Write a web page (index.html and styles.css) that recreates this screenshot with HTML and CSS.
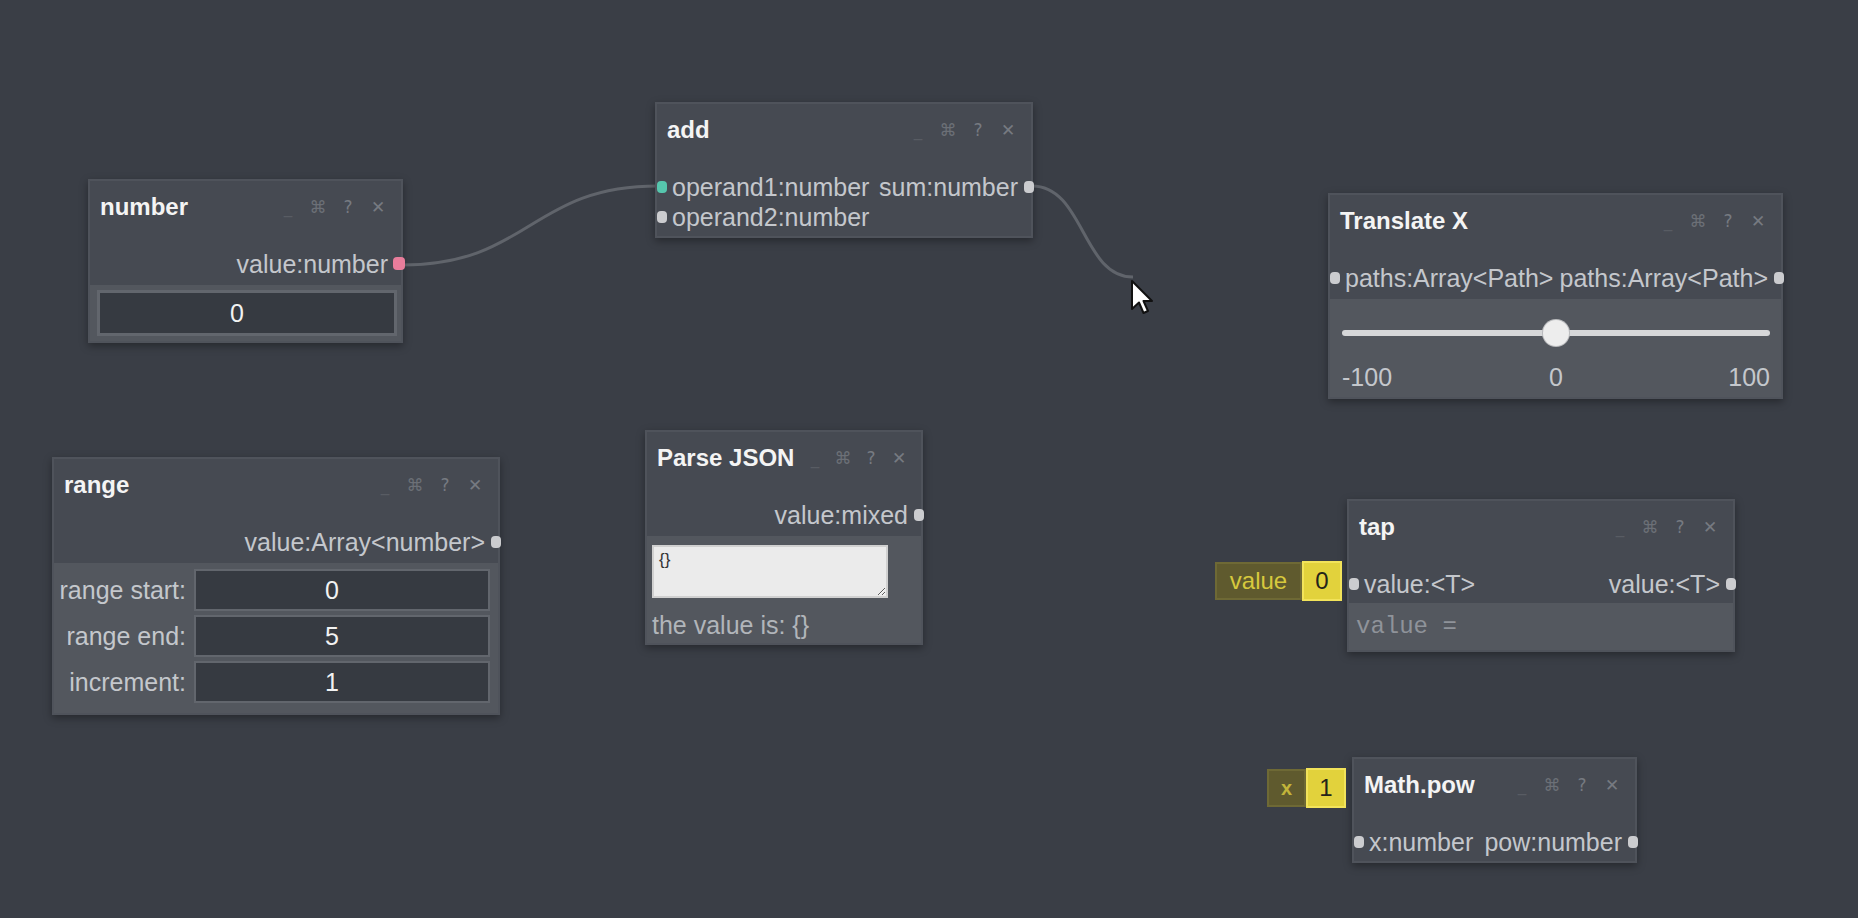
FILE: index.html
```html
<!DOCTYPE html>
<html lang="en">
<head>
  <meta charset="UTF-8" />
  <title>Node Editor</title>
  <link rel="stylesheet" href="styles.css">
</head>
<body>
  <div id="canvas">
    <!-- connections between ports -->
    <svg class="wires" width="1858" height="918">
      <path d="M402 265 C 530 265, 530 186, 658 186" />
      <path d="M1032 186 C 1084 186, 1082 277, 1133 277" />
    </svg>

    <!-- number -->
    <div class="node" id="node-number">
      <div class="node-head">
        <span class="node-title">number</span>
        <span class="node-tools"><span class="t-min">_</span><span class="t-cmd">⌘</span><span>?</span><span>✕</span></span>
      </div>
      <div class="node-ports">
        <div class="port-row"><span></span><span class="port out pink">value:number</span></div>
      </div>
      <div class="node-controls number-box">
        <div class="num-field">0</div>
      </div>
    </div>

    <!-- add -->
    <div class="node" id="node-add">
      <div class="node-head">
        <span class="node-title">add</span>
        <span class="node-tools"><span class="t-min">_</span><span class="t-cmd">⌘</span><span>?</span><span>✕</span></span>
      </div>
      <div class="node-ports last">
        <div class="port-row"><span class="port in teal">operand1:number</span><span class="port out">sum:number</span></div>
        <div class="port-row"><span class="port in">operand2:number</span><span></span></div>
      </div>
    </div>

    <!-- Translate X -->
    <div class="node" id="node-translate">
      <div class="node-head">
        <span class="node-title">Translate X</span>
        <span class="node-tools"><span class="t-min">_</span><span class="t-cmd">⌘</span><span>?</span><span>✕</span></span>
      </div>
      <div class="node-ports">
        <div class="port-row"><span class="port in">paths:Array&lt;Path&gt;</span><span class="port out">paths:Array&lt;Path&gt;</span></div>
      </div>
      <div class="node-controls slider-box">
        <div class="slider">
          <div class="slider-track"></div>
          <div class="slider-thumb" style="left: 50%"></div>
        </div>
        <div class="slider-labels"><span>-100</span><span>0</span><span>100</span></div>
      </div>
    </div>

    <!-- range -->
    <div class="node" id="node-range">
      <div class="node-head">
        <span class="node-title">range</span>
        <span class="node-tools"><span class="t-min">_</span><span class="t-cmd">⌘</span><span>?</span><span>✕</span></span>
      </div>
      <div class="node-ports">
        <div class="port-row"><span></span><span class="port out">value:Array&lt;number&gt;</span></div>
      </div>
      <div class="node-controls range-box">
        <label>range start:</label><div class="num-field">0</div>
        <label>range end:</label><div class="num-field">5</div>
        <label>increment:</label><div class="num-field">1</div>
      </div>
    </div>

    <!-- Parse JSON -->
    <div class="node" id="node-json">
      <div class="node-head">
        <span class="node-title">Parse JSON</span>
        <span class="node-tools"><span class="t-min">_</span><span class="t-cmd">⌘</span><span>?</span><span>✕</span></span>
      </div>
      <div class="node-ports">
        <div class="port-row"><span></span><span class="port out">value:mixed</span></div>
      </div>
      <div class="node-controls json-box">
        <textarea class="json-input" readonly>{}</textarea>
        <div class="json-result">the value is: {}</div>
      </div>
    </div>

    <!-- tap -->
    <div class="node" id="node-tap">
      <div class="node-head">
        <span class="node-title">tap</span>
        <span class="node-tools"><span class="t-min">_</span><span class="t-cmd">⌘</span><span>?</span><span>✕</span></span>
      </div>
      <div class="node-ports last">
        <div class="port-row"><span class="port in">value:&lt;T&gt;</span><span class="port out">value:&lt;T&gt;</span></div>
      </div>
      <div class="code-box">value =</div>
    </div>

    <!-- Math.pow -->
    <div class="node" id="node-pow">
      <div class="node-head">
        <span class="node-title">Math.pow</span>
        <span class="node-tools"><span class="t-min">_</span><span class="t-cmd">⌘</span><span>?</span><span>✕</span></span>
      </div>
      <div class="node-ports last">
        <div class="port-row"><span class="port in">x:number</span><span class="port out">pow:number</span></div>
      </div>
    </div>

    <!-- inline values -->
    <div class="badge" id="badge-value">
      <span class="badge-name">value</span><span class="badge-val">0</span>
    </div>
    <div class="badge" id="badge-x">
      <span class="badge-name">x</span><span class="badge-val">1</span>
    </div>

    <!-- mouse pointer -->
    <svg class="pointer" width="26" height="38" viewBox="0 0 26 38">
      <path d="M2 2 L2 30 L9 23.5 L13.5 34 L18 32 L13.5 22 L22 22 Z" />
    </svg>
  </div>
</body>
</html>
```

FILE: styles.css
```css
/********************************************************
 * Canvas
 ********************************************************/
body {
  margin: 0;
  background-color: #3a3e46;
  font-family: "Liberation Sans", Arial, sans-serif;
}

#canvas {
  position: relative;
  width: 1858px;
  height: 918px;
  overflow: hidden;
  background-color: #3a3e46;
}

.wires {
  position: absolute;
  left: 0;
  top: 0;
}
.wires path {
  fill: none;
  stroke: #60646b;
  stroke-width: 3;
}

.pointer {
  position: absolute;
  left: 1130px;
  top: 279px;
}
.pointer path {
  fill: #fff;
  stroke: #111;
  stroke-width: 2;
  stroke-linejoin: round;
}

/********************************************************
 * Nodes
 ********************************************************/
.node {
  position: absolute;
  box-sizing: border-box;
  background-color: #464a52;
  border: 2px solid #4f535b;
  box-shadow: 0 3px 8px rgba(0,0,0,0.35);
  color: #c4c7cc;
  font-size: 25px;
}

/* placement on the canvas */
#node-number    { left: 88px;   top: 179px; width: 315px; }
#node-add       { left: 655px;  top: 102px; width: 378px; }
#node-translate { left: 1328px; top: 193px; width: 455px; }
#node-range     { left: 52px;   top: 457px; width: 448px; }
#node-json      { left: 645px;  top: 430px; width: 278px; }
#node-tap       { left: 1347px; top: 499px; width: 388px; }
#node-pow       { left: 1352px; top: 757px; width: 285px; }

.node-head {
  height: 52px;
  display: flex;
  align-items: center;
  justify-content: space-between;
  padding-left: 10px;
}

.node-title {
  font-weight: bold;
  font-size: 24px;
  color: #f4f4f4;
  white-space: nowrap;
}

.node-tools {
  display: flex;
  flex-shrink: 0;
  align-items: center;
  padding-right: 8px;
  font-family: "DejaVu Sans", sans-serif;
  font-size: 17px;
  color: #767a81;
}
.node-tools span {
  width: 30px;
  text-align: center;
}
.node-tools .t-min { color: #585c63; }
.node-tools .t-cmd { color: #6c7077; }

/* the json node is narrow, so its tools sit closer */
#node-json .node-tools span {
  width: 28px;
}

/********************************************************
 * Ports
 ********************************************************/
.node-ports {
  padding: 16px 0 6px;
}
.node-ports.last {
  padding-bottom: 4px;
}

.port-row {
  height: 30px;
  display: flex;
  align-items: center;
  justify-content: space-between;
  padding: 0 13px 0 15px;
  white-space: nowrap;
}

.port {
  position: relative;
}
.port.in::before,
.port.out::after {
  content: '';
  position: absolute;
  top: 50%;
  width: 10px;
  height: 12px;
  margin-top: -6px;
  background-color: #cbcccf;
  border-radius: 4px;
}
.port.in::before { left: -15px; }
.port.out::after { right: -16px; }

.port.teal::before {
  background-color: #56c6ad;
}
.port.pink::after {
  width: 12px;
  height: 13px;
  margin-top: -7px;
  right: -17px;
  background-color: #e87d9b;
}

/********************************************************
 * Controls
 ********************************************************/
.node-controls {
  background-color: #53575e;
}

.num-field {
  box-sizing: border-box;
  display: flex;
  align-items: center;
  justify-content: center;
  padding-right: 20px;
  background-color: #363a41;
  border: 2px solid #62666d;
  color: #f2f2f2;
}

.number-box {
  padding: 5px 4px 5px 7px;
}
.number-box .num-field {
  height: 46px;
  border-width: 3px;
}

/* range: label column + fields */
.range-box {
  display: grid;
  grid-template-columns: 136px 1fr;
  column-gap: 4px;
  row-gap: 4px;
  padding: 6px 8px 10px 0;
}
.range-box label {
  display: flex;
  align-items: center;
  justify-content: flex-end;
  padding-right: 4px;
  color: #c4c7cc;
}
.range-box .num-field {
  height: 42px;
}

/* slider */
.slider-box {
  padding: 21px 11px 5px 12px;
}
.slider {
  position: relative;
  height: 26px;
}
.slider-track {
  position: absolute;
  left: 0;
  right: 0;
  top: 10px;
  height: 6px;
  border-radius: 3px;
  background-color: #d6d7d9;
}
.slider-thumb {
  position: absolute;
  top: 0;
  width: 26px;
  height: 26px;
  margin-left: -13px;
  border-radius: 50%;
  background-color: #ededed;
  box-shadow: 0 0 0 1px #b9babd;
}
.slider-labels {
  display: grid;
  grid-template-columns: 1fr auto 1fr;
  margin-top: 16px;
  line-height: 30px;
}
.slider-labels span:last-child {
  text-align: right;
}

/* json */
.json-box {
  padding: 9px 7px 3px 5px;
}
.json-input {
  display: block;
  box-sizing: border-box;
  width: 236px;
  height: 53px;
  margin: 0;
  padding: 3px 5px;
  background-color: #ebebeb;
  border: 2px solid #d0d0d0;
  color: #333;
  font-family: "Liberation Sans", Arial, sans-serif;
  font-size: 17px;
}
.json-result {
  margin-top: 12px;
  line-height: 30px;
  color: #b1b5ba;
}

/* tap */
.code-box {
  height: 47px;
  line-height: 47px;
  padding: 0 7px;
  background-color: #54585f;
  font-family: "Liberation Mono", monospace;
  font-size: 24px;
  color: #8f939a;
}

/********************************************************
 * Inline value badges
 ********************************************************/
.badge {
  position: absolute;
  display: flex;
  height: 40px;
}
#badge-value { left: 1215px; top: 561px; }
#badge-x     { left: 1267px; top: 768px; }

.badge-name {
  box-sizing: border-box;
  display: flex;
  align-items: center;
  justify-content: center;
  height: 38px;
  margin-top: 1px;
  background-color: #5f5a2e;
  border: 2px solid #6e6935;
  color: #d7c93d;
  font-size: 24px;
}
#badge-value .badge-name { width: 87px; }
#badge-x .badge-name     { width: 39px; font-size: 20px; font-weight: bold; color: #c2b43a; }

.badge-val {
  box-sizing: border-box;
  display: flex;
  align-items: center;
  justify-content: center;
  width: 40px;
  background-color: #e2d23c;
  border: 2px solid #f2e35a;
  color: #24231a;
  font-size: 24px;
}
```
